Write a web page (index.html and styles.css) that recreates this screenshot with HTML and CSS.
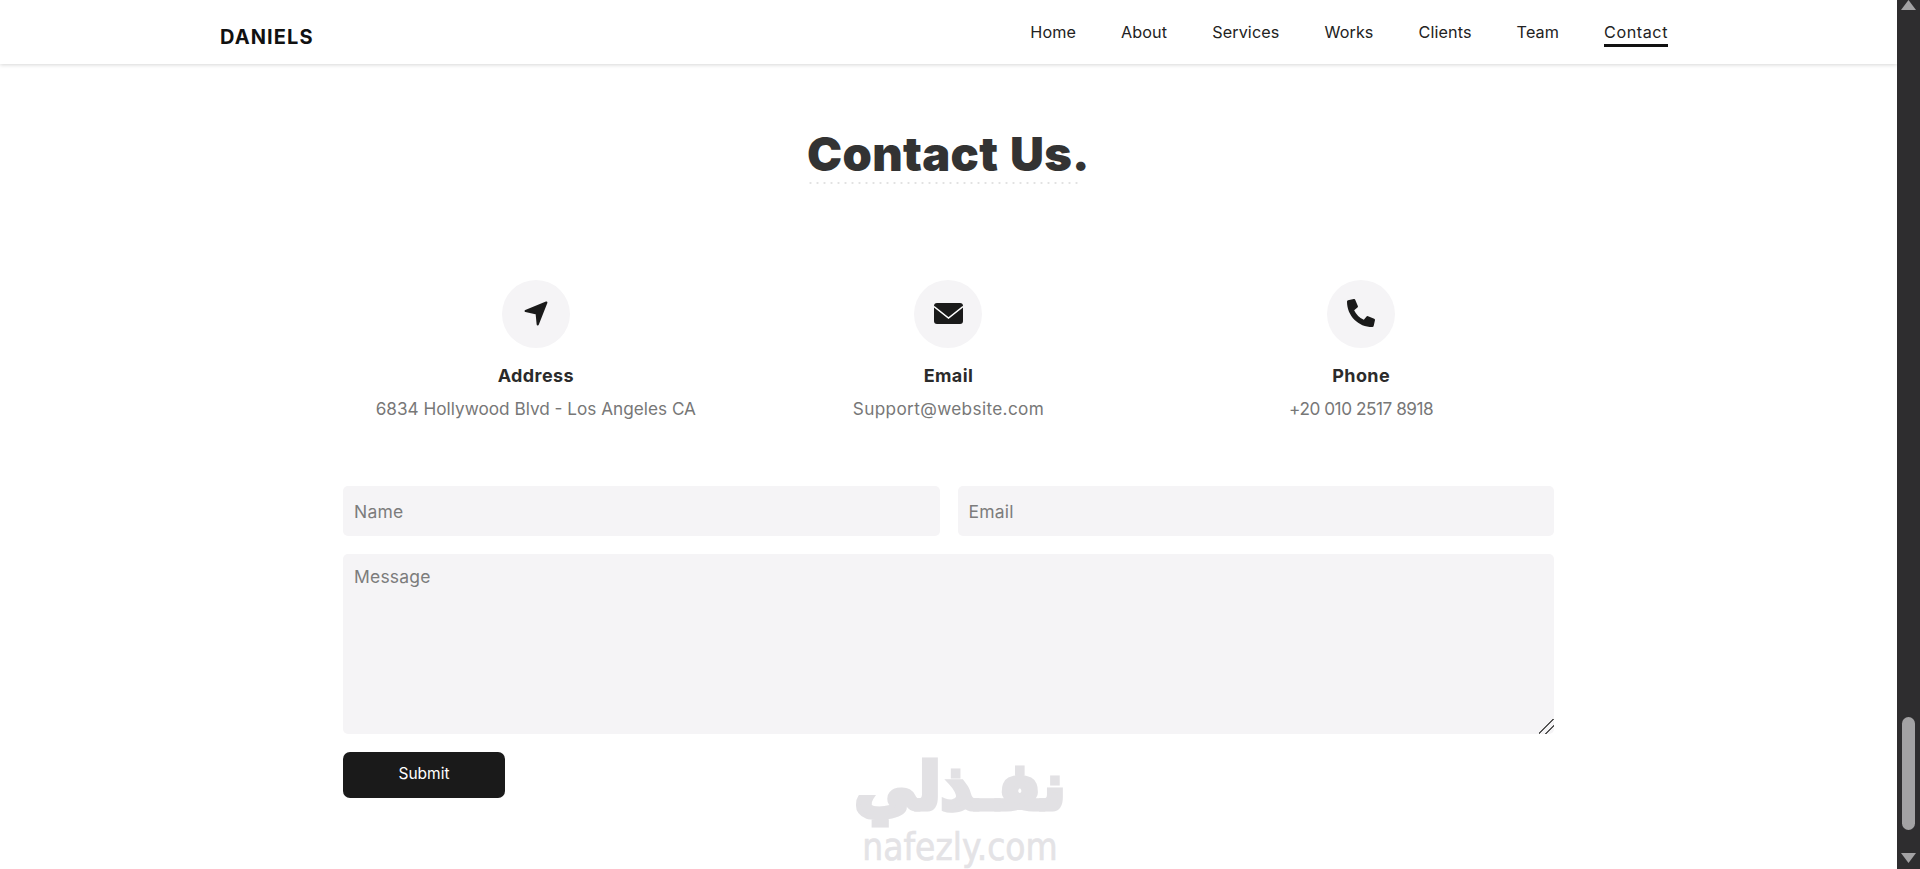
FILE: index.html
```html
<!DOCTYPE html>
<html lang="en">
<head>
    <meta charset="UTF-8">
    <meta name="viewport" content="width=device-width, initial-scale=1.0">
    <title>Daniels</title>
    <link rel="stylesheet" href="styles.css">
</head>
<body>
    <div class="page">
        <header class="header">
            <a class="logo" href="#">DANIELS</a>
            <nav class="nav">
                <a href="#">Home</a>
                <a href="#">About</a>
                <a href="#">Services</a>
                <a href="#">Works</a>
                <a href="#">Clients</a>
                <a href="#">Team</a>
                <a class="active" href="#">Contact</a>
            </nav>
        </header>

        <section class="contact">
            <h1 class="title">Contact Us.</h1>

            <div class="info">
                <div class="info-item">
                    <div class="icon">
                        <svg width="24" height="25" viewBox="0 0 22 23"><path d="M20.5 1.5 L1.5 9.2 L11.6 11.4 L12.6 21.5 Z" fill="#1a1a1a" stroke="#1a1a1a" stroke-width="2" stroke-linejoin="round"/></svg>
                    </div>
                    <h3>Address</h3>
                    <p>6834 Hollywood Blvd - Los Angeles CA</p>
                </div>
                <div class="info-item">
                    <div class="icon">
                        <svg width="29" height="21" viewBox="0 0 29 21"><rect width="29" height="21" rx="3" fill="#1a1a1a"/><path d="M0 3.5 L14.5 15 L29 3.5" fill="none" stroke="#fff" stroke-width="1.5"/></svg>
                    </div>
                    <h3>Email</h3>
                    <p class="wide">Support@website.com</p>
                </div>
                <div class="info-item">
                    <div class="icon">
                        <svg width="28" height="28" viewBox="0 0 512 512"><path fill="#1a1a1a" d="M497.39 361.8l-112-48a24 24 0 0 0-28 6.9l-49.6 60.6A370.66 370.66 0 0 1 130.6 204.11l60.6-49.6a23.94 23.94 0 0 0 6.9-28l-48-112A24.16 24.16 0 0 0 122.6.61l-104 24A24 24 0 0 0 0 48c0 256.5 207.9 464 464 464a24 24 0 0 0 23.4-18.6l24-104a24.29 24.29 0 0 0-14.01-27.6z"/></svg>
                    </div>
                    <h3>Phone</h3>
                    <p class="narrow">+20 010 2517 8918</p>
                </div>
            </div>

            <form class="form">
                <div class="form-row">
                    <input type="text" placeholder="Name">
                    <input type="text" placeholder="Email">
                </div>
                <textarea placeholder="Message"></textarea>
                <button type="button">Submit</button>
            </form>
        </section>

        <div class="watermark">
            <span class="watermark-ar" lang="ar" dir="rtl">نفـذلي</span>
            <span class="watermark-en">nafezly.com</span>
        </div>
    </div>

    <div class="scrollbar">
        <svg class="arrow" width="15" height="11" viewBox="0 0 15 11"><path d="M7.5 0 L15 10 L0 10 Z" fill="#a3a2a4"/></svg>
        <div class="thumb"></div>
        <svg class="arrow" width="15" height="11" viewBox="0 0 15 11"><path d="M0 0 L15 0 L7.5 10 Z" fill="#a3a2a4"/></svg>
    </div>
</body>
</html>
```

FILE: styles.css
```css
* {
    box-sizing: border-box;
}

html, body {
    height: 100%;
}

body {
    margin: 0;
    display: flex;
    overflow: hidden;
    background-color: #fff;
    font-family: Inter, "Liberation Sans", sans-serif;
}

.page {
    flex: 1;
    position: relative;
    overflow: hidden;
}

/* header */
.header {
    height: 64px;
    padding: 0 229px 0 220px;
    display: flex;
    justify-content: space-between;
    align-items: flex-start;
    background-color: #fff;
    box-shadow: 0 1px 4px rgba(0, 0, 0, 0.16);
}

.logo {
    margin-top: 25px;
    color: #111;
    font-size: 20px;
    font-weight: 700;
    letter-spacing: 1.1px;
    line-height: 24px;
    text-decoration: none;
}

.nav {
    display: flex;
    gap: 45px;
    margin-top: 21px;
}

.nav a {
    color: #222;
    font-size: 16.2px;
    letter-spacing: 0.1px;
    line-height: 23px;
    height: 26px;
    text-decoration: none;
}

.nav a.active {
    letter-spacing: 0.55px;
    border-bottom: 3px solid #111;
}

/* contact */
.contact {
    width: 1238px;
    margin: 0 auto;
    display: flex;
    flex-direction: column;
    align-items: center;
}

.title {
    margin: 65px 0 0;
    color: #333;
    font-size: 47px;
    font-weight: 900;
    line-height: 50px;
    letter-spacing: 0.3px;
    word-spacing: 2px;
}

.title::after {
    content: "";
    display: block;
    width: 97%;
    height: 2px;
    margin-top: 3px;
    background-image: radial-gradient(circle, #e2e2e2 1px, transparent 1.2px);
    background-size: 7px 2px;
    background-repeat: repeat-x;
}

.info {
    width: 100%;
    margin-top: 96px;
    display: grid;
    grid-template-columns: repeat(3, 1fr);
}

.info-item {
    text-align: center;
}

.icon {
    width: 68px;
    height: 68px;
    margin: 0 auto;
    display: flex;
    justify-content: center;
    align-items: center;
    border-radius: 50%;
    background-color: #f5f4f6;
}

.icon svg {
    margin-bottom: 2px;
}

.info-item h3 {
    margin: 16px 0 0;
    color: #2b2b2b;
    font-size: 18px;
    font-weight: 700;
    letter-spacing: 0.4px;
    line-height: 24px;
}

.info-item p {
    margin: 8px 0 0;
    color: #777;
    font-size: 17.2px;
    line-height: 26px;
}

.info-item p.wide {
    letter-spacing: 0.35px;
}

.info-item p.narrow {
    letter-spacing: -0.45px;
}

/* form */
.form {
    width: 1211px;
    margin-top: 64px;
    display: flex;
    flex-direction: column;
    align-items: flex-start;
}

.form-row {
    width: 100%;
    display: flex;
    gap: 18px;
}

input, textarea {
    display: block;
    border: none;
    border-radius: 5px;
    outline: none;
    padding: 0 11px;
    background-color: #f5f4f6;
    color: #333;
    font-family: Inter, "Liberation Sans", sans-serif;
    font-size: 17.5px;
    letter-spacing: 0.2px;
}

input {
    flex: 1;
    height: 50px;
}

textarea {
    width: 100%;
    height: 180px;
    margin-top: 18px;
    padding-top: 11px;
    line-height: 24px;
}

textarea::-webkit-resizer {
    background: linear-gradient(135deg, transparent 0 45%, #555 45% 52%, transparent 52% 68%, #555 68% 75%, transparent 75%);
}

::placeholder {
    color: #7c7c7c;
    opacity: 1;
}

button {
    width: 162px;
    height: 46px;
    margin-top: 18px;
    padding-bottom: 4px;
    border: none;
    border-radius: 7px;
    background-color: #1a1a1a;
    color: #fff;
    font-family: Inter, "Liberation Sans", sans-serif;
    font-size: 15.5px;
    cursor: pointer;
}

/* watermark sits over the page */
.watermark {
    position: absolute;
    left: 853px;
    top: 747px;
    width: 214px;
    display: flex;
    flex-direction: column;
    align-items: center;
    pointer-events: none;
}

.watermark-ar {
    color: #e2e1e4;
    font-family: "DejaVu Sans", sans-serif;
    font-size: 62px;
    font-weight: 700;
    line-height: 84px;
    -webkit-text-stroke: 5px #e2e1e4;
    transform: scaleY(1.05);
    transform-origin: center bottom;
}

.watermark-en {
    margin-top: -3px;
    color: #e4e3e6;
    font-family: "DejaVu Sans", sans-serif;
    font-size: 33px;
    line-height: 38px;
    white-space: nowrap;
    -webkit-text-stroke: 0.6px #e4e3e6;
    transform: scaleY(1.15);
}

/* browser scrollbar */
.scrollbar {
    width: 23px;
    flex-shrink: 0;
    display: flex;
    flex-direction: column;
    align-items: center;
    background-color: #2e2d2f;
}

.arrow {
    flex-shrink: 0;
}

.thumb {
    width: 13px;
    height: 113px;
    margin-top: 706px;
    margin-bottom: 23px;
    border-radius: 7px;
    background-color: #a3a2a4;
}
```
